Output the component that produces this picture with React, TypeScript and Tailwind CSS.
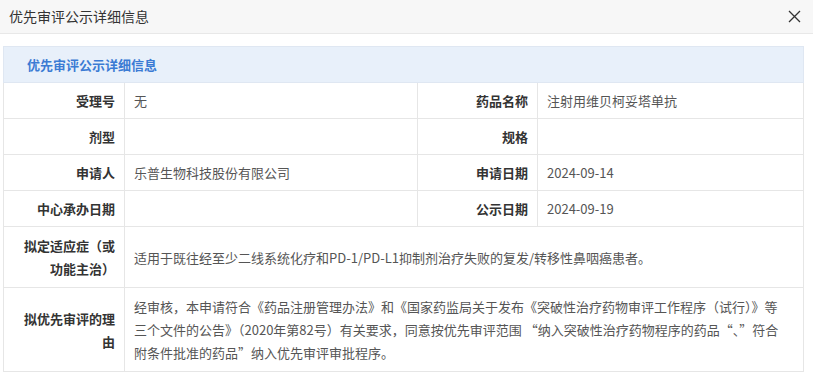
const FONT = "font-['Noto_Sans_CJK_SC','Noto_Sans',sans-serif]";

const rows: [string, string, string, string][] = [
  ['受理号', '无', '药品名称', '注射用维贝柯妥塔单抗'],
  ['剂型', '', '规格', ''],
  ['申请人', '乐普生物科技股份有限公司', '申请日期', '2024-09-14'],
  ['中心承办日期', '', '公示日期', '2024-09-19'],
];

export default function App() {
  const label = 'border border-[#e6e6e6] text-right font-bold text-[#333] pl-[12px] pr-[9px] align-middle';
  const value = 'border border-[#e6e6e6] text-left text-[#555] px-[9px] align-middle';

  return (
    <div className={`w-[813px] h-[381px] bg-white text-[13px] leading-[23px] ${FONT}`}>
      {/* 标题栏 */}
      <div className="flex items-center justify-between h-[34px] bg-[#f7f7f7] border-b border-[#e8e8e8] pl-[9px] pr-[12px]">
        <span className="text-[14px] text-[#333]">优先审评公示详细信息</span>
        <svg width="13" height="13" viewBox="0 0 13 13" className="text-[#333]">
          <path d="M1 1L12 12M12 1L1 12" stroke="currentColor" strokeWidth="1.3" />
        </svg>
      </div>

      <div className="pt-[12px] pl-[3px] pr-[10px]">
        <table className="w-[800px] table-fixed border-collapse border border-[#e2e2e2]">
          <colgroup>
            <col className="w-[121px]" />
            <col className="w-[293px]" />
            <col className="w-[120px]" />
            <col className="w-[266px]" />
          </colgroup>
          <thead>
            <tr>
              <th colSpan={4} className="h-[36px] py-0 bg-[#e8f0fa] border border-[#dfe7f2] text-left pl-[23px] text-[#3b7bd4] font-bold">
                优先审评公示详细信息
              </th>
            </tr>
          </thead>
          <tbody>
            {rows.map(r => (
              <tr key={r[0]}>
                <td className={`${label} h-[36px] py-0`}>{r[0]}</td>
                <td className={`${value} h-[36px] py-0`}>{r[1]}</td>
                <td className={`${label} h-[36px] py-0`}>{r[2]}</td>
                <td className={`${value} h-[36px] py-0`}>{r[3]}</td>
              </tr>
            ))}
            <tr>
              <td className={`${label} py-[7px]`}>拟定适应症（或功能主治）</td>
              <td colSpan={3} className={`${value} py-[7px]`}>
                适用于既往经至少二线系统化疗和PD-1/PD-L1抑制剂治疗失败的复发/转移性鼻咽癌患者。
              </td>
            </tr>
            <tr>
              <td className={`${label} py-[7px]`}>拟优先审评的理由</td>
              <td colSpan={3} className={`${value} py-[7px]`}>
                经审核，本申请符合《药品注册管理办法》和《国家药监局关于发布《突破性治疗药物审评工作程序（试行）》等
                <br />
                三个文件的公告》（2020年第82号）有关要求，同意按优先审评范围 “纳入突破性治疗药物程序的药品“、”符合
                <br />
                附条件批准的药品”纳入优先审评审批程序。
              </td>
            </tr>
          </tbody>
        </table>
      </div>
    </div>
  );
}
